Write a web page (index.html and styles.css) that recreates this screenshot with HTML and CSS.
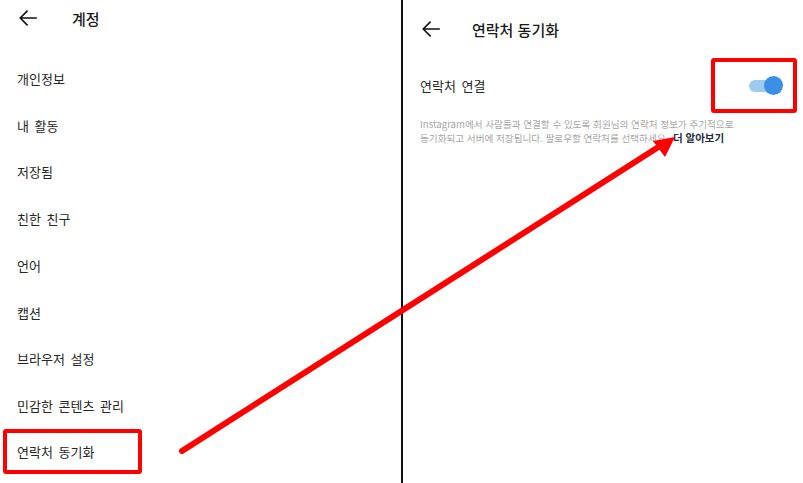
FILE: index.html
```html
<!DOCTYPE html>
<html lang="ko">

<head>
    <meta charset="UTF-8">
    <meta name="viewport" content="width=device-width, initial-scale=1.0">
    <title>계정 - 연락처 동기화</title>
    <link rel="stylesheet" href="styles.css">
</head>

<body>
    <div class="screens">
        <section class="panel panel-left">
            <header class="top-bar">
                <svg class="back" viewBox="0 0 24 24" width="22" height="22">
                    <path d="M21 12H3.5M11 4.5L3.5 12l7.5 7.5" fill="none" stroke="#111" stroke-width="1.8" stroke-linecap="round" stroke-linejoin="round"/>
                </svg>
                <h1>계정</h1>
            </header>
            <ul class="menu">
                <li>개인정보</li>
                <li>내 활동</li>
                <li>저장됨</li>
                <li>친한 친구</li>
                <li>언어</li>
                <li>캡션</li>
                <li>브라우저 설정</li>
                <li>민감한 콘텐츠 관리</li>
                <li class="marked">연락처 동기화</li>
            </ul>
        </section>

        <div class="divider"></div>

        <section class="panel panel-right">
            <header class="top-bar">
                <svg class="back" viewBox="0 0 24 24" width="22" height="22">
                    <path d="M21 12H3.5M11 4.5L3.5 12l7.5 7.5" fill="none" stroke="#111" stroke-width="1.8" stroke-linecap="round" stroke-linejoin="round"/>
                </svg>
                <h1>연락처 동기화</h1>
            </header>
            <div class="setting-row">
                <span class="setting-label">연락처 연결</span>
                <div class="toggle-box">
                    <span class="toggle"><span class="knob"></span></span>
                </div>
            </div>
            <p class="help">Instagram에서 사람들과 연결할 수 있도록 회원님의 연락처 정보가 주기적으로<br>동기화되고 서버에 저장됩니다. 팔로우할 연락처를 선택하세요. <b>더 알아보기</b></p>
        </section>

        <!-- annotation arrow drawn over both screens -->
        <svg class="pointer" viewBox="0 0 803 483" width="803" height="483">
            <line x1="182" y1="451" x2="660" y2="146" stroke="#f00" stroke-width="6" stroke-linecap="round"/>
            <polygon points="675,137 653,141 665,157" fill="#f00"/>
        </svg>
    </div>
</body>

</html>
```

FILE: styles.css
```css
body {
    margin: 0;
    background-color: #fff;
    color: #262626;
    font-family: "Noto Sans CJK KR", "Noto Sans", sans-serif;
}

.screens {
    display: flex;
    width: 803px;
    height: 483px;
    position: relative;
    overflow: hidden;
}

.panel {
    background-color: #fff;
}

.panel-left {
    width: 401px;
}

.panel-right {
    flex: 1;
    padding-right: 6px;
}

.divider {
    width: 2px;
    background-color: #111;
}

/* header with back arrow */
.top-bar {
    display: flex;
    align-items: center;
    padding-left: 17px;
}

.panel-left .top-bar {
    height: 36px;
}

.panel-right .top-bar {
    height: 58px;
}

.back {
    flex-shrink: 0;
}

.top-bar h1 {
    margin: 0;
    font-size: 15px;
    font-weight: 500;
    color: #1a1a1a;
}

.panel-left .top-bar h1 {
    margin-left: 33px;
}

.panel-right .top-bar h1 {
    margin-left: 30px;
}

/* left settings list */
.menu {
    list-style: none;
    margin: 0;
    padding: 19px 0 0;
}

.menu li {
    height: 46.75px;
    display: flex;
    align-items: center;
    padding-left: 17px;
    font-size: 13px;
    word-spacing: 2px;
}

.menu li.marked {
    box-sizing: border-box;
    width: 139px;
    height: 45px;
    margin-left: 3px;
    padding-left: 10px;
    border: 4px solid #f00;
    border-radius: 3px;
}

/* right side */
.setting-row {
    display: flex;
    align-items: center;
    justify-content: space-between;
    height: 55px;
    padding-left: 17px;
}

.setting-label {
    font-size: 13px;
    word-spacing: 2px;
}

.toggle-box {
    box-sizing: border-box;
    width: 86px;
    height: 55px;
    border: 4px solid #f00;
    border-radius: 3px;
    display: flex;
    align-items: center;
    justify-content: flex-end;
    padding-right: 12px;
}

.toggle {
    position: relative;
    display: block;
    width: 32px;
    height: 12px;
    border-radius: 6px;
    background-color: #9fcbf2;
}

.toggle .knob {
    position: absolute;
    right: -2px;
    top: -4px;
    width: 19px;
    height: 19px;
    border-radius: 50%;
    background-color: #3c8fe6;
}

.help {
    margin: 4px 0 0;
    padding-left: 17px;
    font-size: 9.6px;
    line-height: 14px;
    color: #a6a6a6;
}

.help b {
    color: #1f2d3d;
    font-size: 10.5px;
    font-weight: 700;
    margin-left: 2px;
}

.pointer {
    position: absolute;
    left: 0;
    top: 0;
    pointer-events: none;
}
```
